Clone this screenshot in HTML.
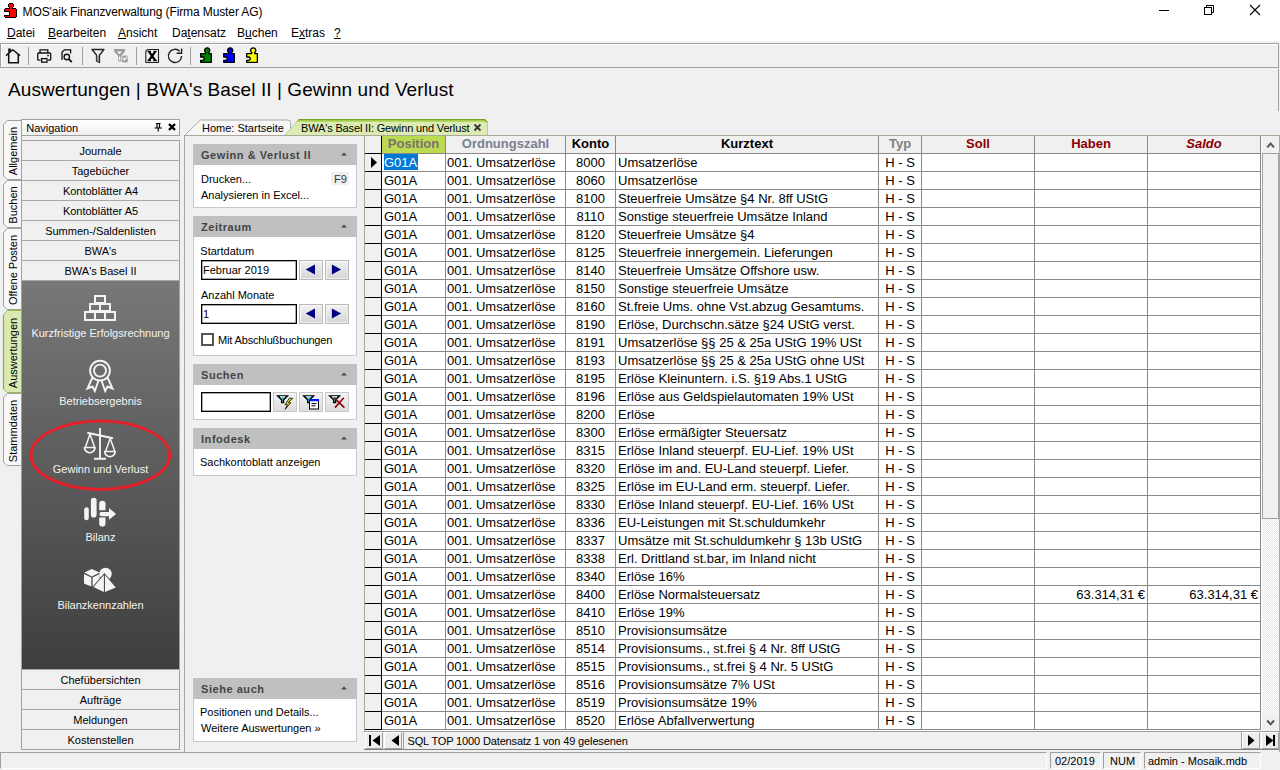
<!DOCTYPE html><html><head><meta charset="utf-8"><style>
*{margin:0;padding:0;box-sizing:border-box}
html,body{width:1280px;height:770px;overflow:hidden;background:#f0f0f0;font-family:"Liberation Sans",sans-serif;color:#000}
.t{position:absolute;white-space:nowrap}
.r{position:absolute}
svg{position:absolute;overflow:visible}
</style></head><body><div class="r" style="left:0px;top:0px;width:1280px;height:41px;background:#fff"></div>
<svg style="left:0;top:0" width="24" height="24" shape-rendering="crispEdges"><g fill="#000"><rect x="9" y="3" width="4" height="1"/><rect x="8" y="4" width="6" height="3"/><rect x="9" y="7" width="4" height="2"/><rect x="5" y="8" width="11" height="1"/><rect x="4" y="9" width="13" height="8"/><rect x="5" y="17" width="11" height="1"/></g><g fill="#f00"><rect x="9" y="4" width="4" height="3"/><rect x="10" y="7" width="2" height="2"/><rect x="5" y="9" width="11" height="8"/></g><rect x="5" y="11" width="5" height="1" fill="#000"/><rect x="9" y="12" width="1" height="3" fill="#000"/><rect x="5" y="15" width="5" height="1" fill="#000"/><rect x="4" y="12" width="5" height="3" fill="#fff"/></svg>
<div class="t" style="left:22.6px;top:3.84px;font-size:12px;line-height:16px;letter-spacing:-0.11px">MOS'aik Finanzverwaltung (Firma Muster AG)</div>
<svg style="left:1150px;top:0" width="130" height="24"><line x1="9" y1="10.5" x2="19" y2="10.5" stroke="#000" stroke-width="1"/><rect x="54.5" y="7.5" width="7" height="7" fill="none" stroke="#000"/><path d="M56.5 7.5 v-2 h7 v7 h-2" fill="none" stroke="#000"/><path d="M100 5 L110 15 M110 5 L100 15" stroke="#000" stroke-width="1.1"/></svg>
<div class="t" style="left:7px;top:24.84px;font-size:12px;line-height:16px;"><u>D</u>atei</div>
<div class="t" style="left:48px;top:24.84px;font-size:12px;line-height:16px;"><u>B</u>earbeiten</div>
<div class="t" style="left:118px;top:24.84px;font-size:12px;line-height:16px;"><u>A</u>nsicht</div>
<div class="t" style="left:172px;top:24.84px;font-size:12px;line-height:16px;">Da<u>t</u>ensatz</div>
<div class="t" style="left:237px;top:24.84px;font-size:12px;line-height:16px;">B<u>u</u>chen</div>
<div class="t" style="left:291px;top:24.84px;font-size:12px;line-height:16px;">E<u>x</u>tras</div>
<div class="t" style="left:334px;top:24.84px;font-size:12px;line-height:16px;"><u>?</u></div>
<div class="r" style="left:0px;top:43px;width:1279px;height:25px;background:#f0f0f0;border:1px solid #a0a0a0;box-shadow:inset 1px 1px 0 #fff"></div>
<div class="r" style="left:28px;top:47px;width:1px;height:18px;background:#a0a0a0"></div>
<div class="r" style="left:82px;top:47px;width:1px;height:18px;background:#a0a0a0"></div>
<div class="r" style="left:136px;top:47px;width:1px;height:18px;background:#a0a0a0"></div>
<div class="r" style="left:190px;top:47px;width:1px;height:18px;background:#a0a0a0"></div>
<svg style="left:0;top:43px" width="280" height="25"><path d="M6 12.6 L12.8 6.8 L20 12.6" fill="none" stroke="#111" stroke-width="1.4" stroke-linejoin="round"/><path d="M8.7 11 V19.8 H18.3 V11" fill="none" stroke="#111" stroke-width="1.5"/><path d="M8.9 9.8 V6.2 H10.2 V8.5" fill="none" stroke="#111" stroke-width="1.4"/><path d="M40 10 V6.8 H47.8 V10" fill="none" stroke="#111" stroke-width="1.3"/><path d="M40.5 17.2 h-1.8 a1 1 0 0 1 -1 -1 v-5.2 a1 1 0 0 1 1 -1 h11 a1 1 0 0 1 1 1 v5.2 a1 1 0 0 1 -1 1 h-1.8" fill="none" stroke="#111" stroke-width="1.3"/><rect x="41.6" y="15.6" width="5.4" height="3.6" fill="none" stroke="#111" stroke-width="1.3"/><circle cx="48" cy="12.6" r="0.9" fill="#111"/><path d="M62 17 V9.3 L64.4 6.8 H70.6 V10.5" fill="none" stroke="#111" stroke-width="1.3"/><circle cx="66.8" cy="14" r="2.7" fill="none" stroke="#111" stroke-width="1.4"/><path d="M68.7 16 L71.8 19.2" stroke="#111" stroke-width="1.8"/><path d="M92 6.5 H104 L99.5 12 V19.5 L96.5 18 V12 Z" fill="none" stroke="#222" stroke-width="1.3" stroke-linejoin="round"/><path d="M96.8 12.5 V17.5 L99 18.5 V12.5z" fill="#999"/><path d="M114 6 H125 V8.5 L121.6 12.5 V18.5 H118.2 V13 L114 8.5z" fill="#9c9c9c"/><path d="M117 8.6 H122 L119.5 11.2z" fill="#fafafa"/><rect x="119" y="13.5" width="1.3" height="4" fill="#fafafa"/><rect x="121.8" y="12.2" width="6.2" height="7.6" rx="1.2" fill="#9c9c9c" stroke="#f4f4f4" stroke-width="0.6"/><path d="M122.9 15 L124.6 16.8 L127 13.6" stroke="#fafafa" stroke-width="1.3" fill="none"/><path d="M145.8 19.5 V8.3 L147.6 6.5 H158.5 V19.5z" fill="none" stroke="#222" stroke-width="1.1"/><path d="M149 8.6 L155.2 17.3 M155.2 8.6 L149 17.3" stroke="#000" stroke-width="2.3"/><path d="M147.6 8.3 H151 M153.6 8.3 H156.6 M147.6 17.5 H151 M153.3 17.5 H156.8" stroke="#000" stroke-width="1.3"/><path d="M181.6 13 A6.6 6.6 0 1 1 179.7 8.3" fill="none" stroke="#222" stroke-width="1.4"/><path d="M176.6 10.3 H181.6 V5.5" fill="none" stroke="#222" stroke-width="1.4"/></svg>
<svg style="left:200px;top:47px" width="14" height="17"><path d="M0.65 6.65 H5.7 V5.6 A2.6 2.6 0 1 1 8.7 5.6 V6.65 H11.35 V15.35 H0.65 V13.3 H2.6 A1.65 1.65 0 0 0 2.6 10 H0.65 Z" fill="#008000" stroke="#000" stroke-width="1.3" stroke-linejoin="round"/></svg>
<svg style="left:223px;top:47px" width="14" height="17"><path d="M0.65 6.65 H5.7 V5.6 A2.6 2.6 0 1 1 8.7 5.6 V6.65 H11.35 V15.35 H0.65 V13.3 H2.6 A1.65 1.65 0 0 0 2.6 10 H0.65 Z" fill="#0000ff" stroke="#000" stroke-width="1.3" stroke-linejoin="round"/></svg>
<svg style="left:246px;top:47px" width="14" height="17"><path d="M0.65 6.65 H5.7 V5.6 A2.6 2.6 0 1 1 8.7 5.6 V6.65 H11.35 V15.35 H0.65 V13.3 H2.6 A1.65 1.65 0 0 0 2.6 10 H0.65 Z" fill="#ffff00" stroke="#000" stroke-width="1.3" stroke-linejoin="round"/></svg>
<div class="t" style="left:8px;top:77.42px;font-size:19px;line-height:25px;letter-spacing:0.08px">Auswertungen | BWA's Basel II | Gewinn und Verlust</div>
<div class="r" style="left:1278px;top:69px;width:1px;height:42px;background:#a0a0a0"></div>
<svg style="left:0;top:120px" width="22" height="61"><path d="M22 0.5 H7.5 L3.5 4.5 V56 L7 59.5 H22" fill="#f7f7f7" stroke="#a0a0a0" stroke-width="1"/></svg>
<div class="t" style="left:13px;top:151.0px;font-size:11px;line-height:12px;transform:translate(-50%,-50%) rotate(-90deg)">Allgemein</div>
<svg style="left:0;top:180px" width="22" height="49"><path d="M22 0.5 H7.5 L3.5 4.5 V44 L7 47.5 H22" fill="#f7f7f7" stroke="#a0a0a0" stroke-width="1"/></svg>
<div class="t" style="left:13px;top:205.0px;font-size:11px;line-height:12px;transform:translate(-50%,-50%) rotate(-90deg)">Buchen</div>
<svg style="left:0;top:228px" width="22" height="83"><path d="M22 0.5 H7.5 L3.5 4.5 V78 L7 81.5 H22" fill="#f7f7f7" stroke="#a0a0a0" stroke-width="1"/></svg>
<div class="t" style="left:13px;top:270.0px;font-size:11px;line-height:12px;transform:translate(-50%,-50%) rotate(-90deg)">Offene Posten</div>
<svg style="left:0;top:310px" width="22" height="84"><path d="M22 0.5 H7.5 L3.5 4.5 V79 L7 82.5 H22" fill="#dbe9b3" stroke="#8cc04a" stroke-width="1"/><path d="M3.5 5 V78.5" stroke="#7cb82e" stroke-width="1.2"/></svg>
<div class="t" style="left:13px;top:352.5px;font-size:11px;line-height:12px;transform:translate(-50%,-50%) rotate(-90deg)">Auswertungen</div>
<svg style="left:0;top:393px" width="22" height="74"><path d="M22 0.5 H7.5 L3.5 4.5 V69 L7 72.5 H22" fill="#f7f7f7" stroke="#a0a0a0" stroke-width="1"/></svg>
<div class="t" style="left:13px;top:430.5px;font-size:11px;line-height:12px;transform:translate(-50%,-50%) rotate(-90deg)">Stammdaten</div>
<div class="r" style="left:21px;top:119px;width:159px;height:17px;background:linear-gradient(#fff,#f0f0f0);border:1px solid #a0a0a0"></div>
<div class="t" style="left:26.2px;top:121.19px;font-size:11px;line-height:14px;">Navigation</div>
<div class="r" style="left:21px;top:135px;width:1px;height:6px;background:#a0a0a0"></div>
<svg style="left:150px;top:119px" width="30" height="17"><path d="M6 4.5 h4.5 M7 4.5 v4.5 M9.5 4.5 v4.5 M4.5 9 h7.5 M8.2 9 v3.5" stroke="#000" stroke-width="1.2" fill="none"/><path d="M19 5 L25 11 M25 5 L19 11" stroke="#000" stroke-width="2.4"/></svg>
<div class="r" style="left:21px;top:140px;width:159px;height:610px;background:#f0f0f0;border:1px solid #a0a0a0"></div>
<div class="t" style="left:22px;top:144.19px;font-size:11px;line-height:14px;width:157px;text-align:center;">Journale</div>
<div class="r" style="left:22px;top:160px;width:157px;height:1px;background:#a8a8a8"></div>
<div class="t" style="left:22px;top:164.19px;font-size:11px;line-height:14px;width:157px;text-align:center;">Tagebücher</div>
<div class="r" style="left:22px;top:180px;width:157px;height:1px;background:#a8a8a8"></div>
<div class="t" style="left:22px;top:184.19px;font-size:11px;line-height:14px;width:157px;text-align:center;">Kontoblätter A4</div>
<div class="r" style="left:22px;top:200px;width:157px;height:1px;background:#a8a8a8"></div>
<div class="t" style="left:22px;top:204.19px;font-size:11px;line-height:14px;width:157px;text-align:center;">Kontoblätter A5</div>
<div class="r" style="left:22px;top:220px;width:157px;height:1px;background:#a8a8a8"></div>
<div class="t" style="left:22px;top:224.19px;font-size:11px;line-height:14px;width:157px;text-align:center;">Summen-/Saldenlisten</div>
<div class="r" style="left:22px;top:240px;width:157px;height:1px;background:#a8a8a8"></div>
<div class="t" style="left:22px;top:244.19px;font-size:11px;line-height:14px;width:157px;text-align:center;">BWA's</div>
<div class="r" style="left:22px;top:260px;width:157px;height:1px;background:#a8a8a8"></div>
<div class="t" style="left:22px;top:264.19px;font-size:11px;line-height:14px;width:157px;text-align:center;">BWA's Basel II</div>
<div class="r" style="left:22px;top:280px;width:157px;height:1px;background:#a8a8a8"></div>
<div class="r" style="left:22px;top:281px;width:157px;height:388px;background:linear-gradient(#787878,#3e3e3e)"></div>
<div class="r" style="left:22px;top:669px;width:157px;height:1px;background:#a8a8a8"></div>
<div class="t" style="left:22px;top:673.19px;font-size:11px;line-height:14px;width:157px;text-align:center;">Chefübersichten</div>
<div class="r" style="left:22px;top:689px;width:157px;height:1px;background:#a8a8a8"></div>
<div class="t" style="left:22px;top:693.19px;font-size:11px;line-height:14px;width:157px;text-align:center;">Aufträge</div>
<div class="r" style="left:22px;top:709px;width:157px;height:1px;background:#a8a8a8"></div>
<div class="t" style="left:22px;top:713.19px;font-size:11px;line-height:14px;width:157px;text-align:center;">Meldungen</div>
<div class="r" style="left:22px;top:729px;width:157px;height:1px;background:#a8a8a8"></div>
<div class="t" style="left:22px;top:733.19px;font-size:11px;line-height:14px;width:157px;text-align:center;">Kostenstellen</div>
<div class="t" style="left:22px;top:326.39px;font-size:11px;line-height:14px;width:157px;text-align:center;color:#f4f4f4">Kurzfristige Erfolgsrechnung</div>
<div class="t" style="left:22px;top:393.89px;font-size:11px;line-height:14px;width:157px;text-align:center;color:#f4f4f4">Betriebsergebnis</div>
<div class="t" style="left:22px;top:461.89px;font-size:11px;line-height:14px;width:157px;text-align:center;color:#f4f4f4">Gewinn und Verlust</div>
<div class="t" style="left:22px;top:529.89px;font-size:11px;line-height:14px;width:157px;text-align:center;color:#f4f4f4">Bilanz</div>
<div class="t" style="left:22px;top:597.89px;font-size:11px;line-height:14px;width:157px;text-align:center;color:#f4f4f4">Bilanzkennzahlen</div>
<svg style="left:0;top:0" width="200" height="770"><g fill="none" stroke="#f4f4f4" stroke-width="2"><rect x="95" y="296" width="10" height="7"/><rect x="90" y="304" width="20" height="7"/><path d="M100 304 V311"/><rect x="85" y="312" width="30" height="8"/><path d="M95 312 V320 M105 312 V320"/></g><g fill="none" stroke="#f4f4f4" stroke-width="1.9"><circle cx="100" cy="370.6" r="9.9"/><circle cx="100" cy="370.6" r="6"/><path d="M92.5 377.5 L87.5 388.5 L92.5 386.5 L94.8 391 L98.5 380.5 M107.5 377.5 L112.5 388.5 L107.5 386.5 L105.2 391 L101.5 380.5" stroke-linejoin="miter"/></g><g fill="none" stroke="#f4f4f4" stroke-width="1.9"><path d="M100 428 V458 M94 458.8 H106"/><path d="M87.3 432.8 L113 438.3" stroke-width="2"/><path d="M90 434 L85.5 447 M90 434 L94.5 447 M110.2 438.5 L105.7 451 M110.2 438.5 L114.7 451" stroke-width="1.5"/><path d="M84.5 447.5 h10.5 a5.25 5.25 0 0 1 -10.5 0z M104.7 451.5 h10.5 a5.25 5.25 0 0 1 -10.5 0z" stroke-width="1.7"/></g><g fill="#f4f4f4"><rect x="84.2" y="507.3" width="4.6" height="13" rx="2.3"/><rect x="90.9" y="497.7" width="5.7" height="19.8" rx="2.8"/><path d="M99.2 510.2 V504 a3.15 3.15 0 0 1 6.3 0 V510.2z"/><path d="M99.2 517.5 V523.4 a3.15 3.15 0 0 0 6.3 0 V517.5z"/><path d="M101.5 512 H109 V508.1 L116.1 514 L109 519.8 V516.2 H101.5 a2.1 2.1 0 0 1 0 -4.2z"/></g><g fill="#f4f4f4"><circle cx="105.5" cy="574" r="6.2"/><path d="M84.4 572.6 L91.7 569 L99.7 572.6 L91.8 576.6z"/><path d="M84 574 V583.5 L91.3 586.6 V577.5z"/><path d="M92.6 577.5 L99.7 574 V583 L92.6 586.6z"/></g><path d="M104.4 573 L92 587.3 L104.4 593.3 L117 587.7z" fill="#4c4c4c"/><path d="M104.4 574.5 L93.4 587 L103.9 592 V575z M105 575 V592 L115.8 587.4z" fill="#f4f4f4"/><ellipse cx="100.3" cy="455.2" rx="69.3" ry="34.2" fill="none" stroke="#e4202a" stroke-width="3"/></svg>
<svg style="left:180px;top:115px" width="320" height="22"><path d="M4.5 20.5 L20.5 5 H108 Q110.5 5 110.5 7.5 V20.5" fill="#f7f7f7" stroke="#a8a8a8" stroke-width="1"/><path d="M104.5 20.5 L118.5 4.5 H304.5 L307.5 7.5 V20.5 Z" fill="#dcebb4" stroke="#b9cf98" stroke-width="1"/><path d="M118 5 L116.3 7 H307.3 L305 4.5z" fill="#b6d862"/><path d="M118.5 4.6 H304.6 L307.4 7.4" fill="none" stroke="#6da51d" stroke-width="1.2"/></svg>
<div class="t" style="left:202px;top:121.19px;font-size:11px;line-height:14px;">Home: Startseite</div>
<div class="t" style="left:301px;top:121.19px;font-size:11px;line-height:14px;letter-spacing:-0.15px">BWA's Basel II: Gewinn und Verlust</div>
<svg style="left:472px;top:122px" width="12" height="12"><path d="M2.5 2.5 L8.5 8.5 M8.5 2.5 L2.5 8.5" stroke="#333" stroke-width="1.8"/></svg>
<div class="r" style="left:184px;top:135px;width:1096px;height:1px;background:#aca899"></div>
<div class="r" style="left:184px;top:135px;width:1px;height:617px;background:#aca899"></div>
<div class="r" style="left:1279px;top:135px;width:1px;height:617px;background:#aca899"></div>
<div class="r" style="left:193px;top:144px;width:164px;height:21px;background:#c0c0c0"></div>
<div class="r" style="left:193px;top:165px;width:164px;height:43px;background:#fff;border:1px solid #c8c8c8;border-top:none"></div>
<div class="t" style="left:201px;top:148.19px;font-size:11px;line-height:14px;font-weight:bold;color:#444;letter-spacing:0.55px">Gewinn &amp; Verlust II</div>
<svg style="left:338px;top:150px" width="12" height="8"><path d="M3 5.5 L6 2.5 L9 5.5z" fill="#444"/></svg>
<div class="t" style="left:201px;top:172.19px;font-size:11px;line-height:14px;">Drucken...</div>
<div class="r" style="left:331px;top:172px;width:18px;height:13px;background:#f0f0f0"></div>
<div class="t" style="left:334px;top:172.19px;font-size:11px;line-height:14px;color:#333">F9</div>
<div class="t" style="left:201px;top:188.19px;font-size:11px;line-height:14px;">Analysieren in Excel...</div>
<div class="r" style="left:193px;top:216px;width:164px;height:21px;background:#c0c0c0"></div>
<div class="r" style="left:193px;top:237px;width:164px;height:119px;background:#fff;border:1px solid #c8c8c8;border-top:none"></div>
<div class="t" style="left:201px;top:220.19px;font-size:11px;line-height:14px;font-weight:bold;color:#444;letter-spacing:0.55px">Zeitraum</div>
<svg style="left:338px;top:222px" width="12" height="8"><path d="M3 5.5 L6 2.5 L9 5.5z" fill="#444"/></svg>
<div class="t" style="left:200.3px;top:244.19px;font-size:11px;line-height:14px;">Startdatum</div>
<div class="r" style="left:201px;top:260px;width:96px;height:20px;background:#fff;border:1px solid #000;box-shadow:inset 0 0 0 0.5px #555"></div>
<div class="t" style="left:203px;top:262.69px;font-size:11px;line-height:14px;">Februar 2019</div>
<div class="r" style="left:299px;top:260px;width:24px;height:20px;background:linear-gradient(#f2f2f2,#d4d4d4);border:1px solid #b8b8b8;box-shadow:inset 1px 1px 0 #fafafa,inset -1px -1px 0 #ececec"></div>
<svg style="left:299px;top:260px" width="24" height="20"><path d="M6.7 9.5 L16 4.6 V14.4z" fill="#000080"/></svg>
<div class="r" style="left:325px;top:260px;width:24px;height:20px;background:linear-gradient(#f2f2f2,#d4d4d4);border:1px solid #b8b8b8;box-shadow:inset 1px 1px 0 #fafafa,inset -1px -1px 0 #ececec"></div>
<svg style="left:325px;top:260px" width="24" height="20"><path d="M16.1 9.5 L6.9 4.6 V14.4z" fill="#000080"/></svg>
<div class="t" style="left:201px;top:288.19px;font-size:11px;line-height:14px;">Anzahl Monate</div>
<div class="r" style="left:201px;top:304px;width:96px;height:20px;background:#fff;border:1px solid #000;box-shadow:inset 0 0 0 0.5px #555"></div>
<div class="t" style="left:203px;top:306.69px;font-size:11px;line-height:14px;">1</div>
<div class="r" style="left:299px;top:304px;width:24px;height:20px;background:linear-gradient(#f2f2f2,#d4d4d4);border:1px solid #b8b8b8;box-shadow:inset 1px 1px 0 #fafafa,inset -1px -1px 0 #ececec"></div>
<svg style="left:299px;top:304px" width="24" height="20"><path d="M6.7 9.5 L16 4.6 V14.4z" fill="#000080"/></svg>
<div class="r" style="left:325px;top:304px;width:24px;height:20px;background:linear-gradient(#f2f2f2,#d4d4d4);border:1px solid #b8b8b8;box-shadow:inset 1px 1px 0 #fafafa,inset -1px -1px 0 #ececec"></div>
<svg style="left:325px;top:304px" width="24" height="20"><path d="M16.1 9.5 L6.9 4.6 V14.4z" fill="#000080"/></svg>
<div class="r" style="left:201px;top:333px;width:13px;height:13px;background:#fff;border:2px solid #555"></div>
<div class="t" style="left:218px;top:333.19px;font-size:11px;line-height:14px;letter-spacing:-0.15px">Mit Abschlußbuchungen</div>
<div class="r" style="left:193px;top:364px;width:164px;height:21px;background:#c0c0c0"></div>
<div class="r" style="left:193px;top:385px;width:164px;height:35px;background:#fff;border:1px solid #c8c8c8;border-top:none"></div>
<div class="t" style="left:201px;top:368.19px;font-size:11px;line-height:14px;font-weight:bold;color:#444;letter-spacing:0.55px">Suchen</div>
<svg style="left:338px;top:370px" width="12" height="8"><path d="M3 5.5 L6 2.5 L9 5.5z" fill="#444"/></svg>
<div class="r" style="left:201px;top:392px;width:70px;height:20px;background:#fff;border:1px solid #000;box-shadow:inset 0 0 0 0.5px #555"></div>
<div class="r" style="left:273px;top:392px;width:24px;height:20px;background:linear-gradient(#f4f4f4,#dcdcdc);border:1px solid #c8c8c8"></div>
<div class="r" style="left:299px;top:392px;width:24px;height:20px;background:linear-gradient(#f4f4f4,#dcdcdc);border:1px solid #c8c8c8"></div>
<div class="r" style="left:325px;top:392px;width:24px;height:20px;background:linear-gradient(#f4f4f4,#dcdcdc);border:1px solid #c8c8c8"></div>
<svg style="left:273px;top:392px" width="80" height="20"><path d="M4.6 3.8 H14.6 L10.6 7.8 V10.6 H8.6 V7.8 Z" fill="#5cc8c8" stroke="#000" stroke-width="1.3" stroke-linejoin="miter"/><path d="M7 4.6 H12.2" stroke="#fff" stroke-width="0.8"/><path d="M19.6 6.2 L15.2 10.8 H17.6 L12.2 17.2 L14.4 12.6 H12.2 L16.4 6.2z" fill="#f4e800" stroke="#111" stroke-width="0.9" stroke-linejoin="miter"/><path d="M30.6 3.8 H40.6 L36.6 7.8 V10.6 H34.6 V7.8 Z" fill="#5cc8c8" stroke="#000" stroke-width="1.3" stroke-linejoin="miter"/><path d="M33 4.6 H38.2" stroke="#fff" stroke-width="0.8"/><rect x="36.5" y="7.5" width="9" height="9.5" fill="#fff" stroke="#000" stroke-width="1"/><rect x="36" y="7" width="10" height="2.2" fill="#0018f0"/><path d="M38.5 11.6 h5 M38.5 13.8 h4" stroke="#000" stroke-width="1"/><path d="M56.6 3.8 H66.6 L62.6 7.8 V10.6 H60.6 V7.8 Z" fill="#5cc8c8" stroke="#000" stroke-width="1.3" stroke-linejoin="miter"/><path d="M59 4.6 H64.2" stroke="#fff" stroke-width="0.8"/><path d="M61.2 5.8 L71.4 15.6 M70.8 5.8 L62 15.6" stroke="#8b0a0a" stroke-width="1.7"/></svg>
<div class="r" style="left:193px;top:428px;width:164px;height:21px;background:#c0c0c0"></div>
<div class="r" style="left:193px;top:449px;width:164px;height:27px;background:#fff;border:1px solid #c8c8c8;border-top:none"></div>
<div class="t" style="left:201px;top:432.19px;font-size:11px;line-height:14px;font-weight:bold;color:#444;letter-spacing:0.55px">Infodesk</div>
<svg style="left:338px;top:434px" width="12" height="8"><path d="M3 5.5 L6 2.5 L9 5.5z" fill="#444"/></svg>
<div class="t" style="left:200px;top:455.19px;font-size:11px;line-height:14px;">Sachkontoblatt anzeigen</div>
<div class="r" style="left:193px;top:678px;width:164px;height:21px;background:#c0c0c0"></div>
<div class="r" style="left:193px;top:699px;width:164px;height:43px;background:#fff;border:1px solid #c8c8c8;border-top:none"></div>
<div class="t" style="left:201px;top:682.19px;font-size:11px;line-height:14px;font-weight:bold;color:#444;letter-spacing:0.55px">Siehe auch</div>
<svg style="left:338px;top:684px" width="12" height="8"><path d="M3 5.5 L6 2.5 L9 5.5z" fill="#444"/></svg>
<div class="t" style="left:200px;top:705.19px;font-size:11px;line-height:14px;">Positionen und Details...</div>
<div class="t" style="left:201px;top:721.19px;font-size:11px;line-height:14px;">Weitere Auswertungen »</div>
<div class="r" style="left:364px;top:136px;width:897px;height:596px;background:#fff"></div>
<div class="r" style="left:364px;top:136px;width:1px;height:596px;background:#aca899"></div>
<div class="r" style="left:365px;top:136px;width:896px;height:17px;background:#f0f0f0"></div>
<div class="r" style="left:382px;top:136px;width:63px;height:17px;background:#badb52"></div>
<div class="r" style="left:365px;top:154px;width:16px;height:576px;background:#f0f0f0"></div>
<div class="r" style="left:382px;top:153px;width:879px;height:1px;background:#888"></div>
<div class="r" style="left:365px;top:153px;width:17px;height:1px;background:#000"></div>
<div class="r" style="left:382px;top:171px;width:879px;height:1px;background:#888"></div>
<div class="r" style="left:365px;top:171px;width:17px;height:1px;background:#000"></div>
<div class="r" style="left:382px;top:189px;width:879px;height:1px;background:#888"></div>
<div class="r" style="left:365px;top:189px;width:17px;height:1px;background:#000"></div>
<div class="r" style="left:382px;top:207px;width:879px;height:1px;background:#888"></div>
<div class="r" style="left:365px;top:207px;width:17px;height:1px;background:#000"></div>
<div class="r" style="left:382px;top:225px;width:879px;height:1px;background:#888"></div>
<div class="r" style="left:365px;top:225px;width:17px;height:1px;background:#000"></div>
<div class="r" style="left:382px;top:243px;width:879px;height:1px;background:#888"></div>
<div class="r" style="left:365px;top:243px;width:17px;height:1px;background:#000"></div>
<div class="r" style="left:382px;top:261px;width:879px;height:1px;background:#888"></div>
<div class="r" style="left:365px;top:261px;width:17px;height:1px;background:#000"></div>
<div class="r" style="left:382px;top:279px;width:879px;height:1px;background:#888"></div>
<div class="r" style="left:365px;top:279px;width:17px;height:1px;background:#000"></div>
<div class="r" style="left:382px;top:297px;width:879px;height:1px;background:#888"></div>
<div class="r" style="left:365px;top:297px;width:17px;height:1px;background:#000"></div>
<div class="r" style="left:382px;top:315px;width:879px;height:1px;background:#888"></div>
<div class="r" style="left:365px;top:315px;width:17px;height:1px;background:#000"></div>
<div class="r" style="left:382px;top:333px;width:879px;height:1px;background:#888"></div>
<div class="r" style="left:365px;top:333px;width:17px;height:1px;background:#000"></div>
<div class="r" style="left:382px;top:351px;width:879px;height:1px;background:#888"></div>
<div class="r" style="left:365px;top:351px;width:17px;height:1px;background:#000"></div>
<div class="r" style="left:382px;top:369px;width:879px;height:1px;background:#888"></div>
<div class="r" style="left:365px;top:369px;width:17px;height:1px;background:#000"></div>
<div class="r" style="left:382px;top:387px;width:879px;height:1px;background:#888"></div>
<div class="r" style="left:365px;top:387px;width:17px;height:1px;background:#000"></div>
<div class="r" style="left:382px;top:405px;width:879px;height:1px;background:#888"></div>
<div class="r" style="left:365px;top:405px;width:17px;height:1px;background:#000"></div>
<div class="r" style="left:382px;top:423px;width:879px;height:1px;background:#888"></div>
<div class="r" style="left:365px;top:423px;width:17px;height:1px;background:#000"></div>
<div class="r" style="left:382px;top:441px;width:879px;height:1px;background:#888"></div>
<div class="r" style="left:365px;top:441px;width:17px;height:1px;background:#000"></div>
<div class="r" style="left:382px;top:459px;width:879px;height:1px;background:#888"></div>
<div class="r" style="left:365px;top:459px;width:17px;height:1px;background:#000"></div>
<div class="r" style="left:382px;top:477px;width:879px;height:1px;background:#888"></div>
<div class="r" style="left:365px;top:477px;width:17px;height:1px;background:#000"></div>
<div class="r" style="left:382px;top:495px;width:879px;height:1px;background:#888"></div>
<div class="r" style="left:365px;top:495px;width:17px;height:1px;background:#000"></div>
<div class="r" style="left:382px;top:513px;width:879px;height:1px;background:#888"></div>
<div class="r" style="left:365px;top:513px;width:17px;height:1px;background:#000"></div>
<div class="r" style="left:382px;top:531px;width:879px;height:1px;background:#888"></div>
<div class="r" style="left:365px;top:531px;width:17px;height:1px;background:#000"></div>
<div class="r" style="left:382px;top:549px;width:879px;height:1px;background:#888"></div>
<div class="r" style="left:365px;top:549px;width:17px;height:1px;background:#000"></div>
<div class="r" style="left:382px;top:567px;width:879px;height:1px;background:#888"></div>
<div class="r" style="left:365px;top:567px;width:17px;height:1px;background:#000"></div>
<div class="r" style="left:382px;top:585px;width:879px;height:1px;background:#888"></div>
<div class="r" style="left:365px;top:585px;width:17px;height:1px;background:#000"></div>
<div class="r" style="left:382px;top:603px;width:879px;height:1px;background:#888"></div>
<div class="r" style="left:365px;top:603px;width:17px;height:1px;background:#000"></div>
<div class="r" style="left:382px;top:621px;width:879px;height:1px;background:#888"></div>
<div class="r" style="left:365px;top:621px;width:17px;height:1px;background:#000"></div>
<div class="r" style="left:382px;top:639px;width:879px;height:1px;background:#888"></div>
<div class="r" style="left:365px;top:639px;width:17px;height:1px;background:#000"></div>
<div class="r" style="left:382px;top:657px;width:879px;height:1px;background:#888"></div>
<div class="r" style="left:365px;top:657px;width:17px;height:1px;background:#000"></div>
<div class="r" style="left:382px;top:675px;width:879px;height:1px;background:#888"></div>
<div class="r" style="left:365px;top:675px;width:17px;height:1px;background:#000"></div>
<div class="r" style="left:382px;top:693px;width:879px;height:1px;background:#888"></div>
<div class="r" style="left:365px;top:693px;width:17px;height:1px;background:#000"></div>
<div class="r" style="left:382px;top:711px;width:879px;height:1px;background:#888"></div>
<div class="r" style="left:365px;top:711px;width:17px;height:1px;background:#000"></div>
<div class="r" style="left:382px;top:729px;width:879px;height:1px;background:#888"></div>
<div class="r" style="left:365px;top:729px;width:17px;height:1px;background:#000"></div>
<div class="r" style="left:445px;top:136px;width:1px;height:594px;background:#888"></div>
<div class="r" style="left:565px;top:136px;width:1px;height:594px;background:#888"></div>
<div class="r" style="left:615px;top:136px;width:1px;height:594px;background:#888"></div>
<div class="r" style="left:878px;top:136px;width:1px;height:594px;background:#888"></div>
<div class="r" style="left:921px;top:136px;width:1px;height:594px;background:#888"></div>
<div class="r" style="left:1034px;top:136px;width:1px;height:594px;background:#888"></div>
<div class="r" style="left:1147px;top:136px;width:1px;height:594px;background:#888"></div>
<div class="r" style="left:1260px;top:136px;width:1px;height:594px;background:#888"></div>
<div class="r" style="left:381px;top:136px;width:1px;height:594px;background:#000"></div>
<div class="t" style="left:382px;top:135.40px;font-size:13px;line-height:17px;width:63px;text-align:center;font-weight:bold;color:#7a7070">Position</div>
<div class="t" style="left:446px;top:135.40px;font-size:13px;line-height:17px;width:119px;text-align:center;font-weight:bold;color:#7a8090">Ordnungszahl</div>
<div class="t" style="left:566px;top:135.40px;font-size:13px;line-height:17px;width:49px;text-align:center;font-weight:bold;color:#000">Konto</div>
<div class="t" style="left:616px;top:135.40px;font-size:13px;line-height:17px;width:262px;text-align:center;font-weight:bold;color:#000">Kurztext</div>
<div class="t" style="left:879px;top:135.40px;font-size:13px;line-height:17px;width:42px;text-align:center;font-weight:bold;color:#808080">Typ</div>
<div class="t" style="left:922px;top:135.40px;font-size:13px;line-height:17px;width:112px;text-align:center;font-weight:bold;color:#8b0000">Soll</div>
<div class="t" style="left:1035px;top:135.40px;font-size:13px;line-height:17px;width:112px;text-align:center;font-weight:bold;color:#8b0000">Haben</div>
<div class="t" style="left:1148px;top:135.40px;font-size:13px;line-height:17px;width:112px;text-align:center;font-weight:bold;color:#8b0000;font-style:italic">Saldo</div>
<div class="r" style="left:384px;top:154px;width:34px;height:16px;background:#0078d7"></div>
<div class="t" style="left:384px;top:154.00px;font-size:13px;line-height:17px;color:#fff">G01A</div>
<div class="t" style="left:447px;top:154.00px;font-size:13px;line-height:17px;">001. Umsatzerlöse</div>
<div class="t" style="left:566px;top:154.00px;font-size:13px;line-height:17px;width:49px;text-align:center;">8000</div>
<div class="t" style="left:618px;top:154.00px;font-size:13px;line-height:17px;">Umsatzerlöse</div>
<div class="t" style="left:879px;top:154.00px;font-size:13px;line-height:17px;width:42px;text-align:center;">H - S</div>
<div class="t" style="left:384px;top:172.00px;font-size:13px;line-height:17px;">G01A</div>
<div class="t" style="left:447px;top:172.00px;font-size:13px;line-height:17px;">001. Umsatzerlöse</div>
<div class="t" style="left:566px;top:172.00px;font-size:13px;line-height:17px;width:49px;text-align:center;">8060</div>
<div class="t" style="left:618px;top:172.00px;font-size:13px;line-height:17px;">Umsatzerlöse</div>
<div class="t" style="left:879px;top:172.00px;font-size:13px;line-height:17px;width:42px;text-align:center;">H - S</div>
<div class="t" style="left:384px;top:190.00px;font-size:13px;line-height:17px;">G01A</div>
<div class="t" style="left:447px;top:190.00px;font-size:13px;line-height:17px;">001. Umsatzerlöse</div>
<div class="t" style="left:566px;top:190.00px;font-size:13px;line-height:17px;width:49px;text-align:center;">8100</div>
<div class="t" style="left:618px;top:190.00px;font-size:13px;line-height:17px;">Steuerfreie Umsätze §4 Nr. 8ff UStG</div>
<div class="t" style="left:879px;top:190.00px;font-size:13px;line-height:17px;width:42px;text-align:center;">H - S</div>
<div class="t" style="left:384px;top:208.00px;font-size:13px;line-height:17px;">G01A</div>
<div class="t" style="left:447px;top:208.00px;font-size:13px;line-height:17px;">001. Umsatzerlöse</div>
<div class="t" style="left:566px;top:208.00px;font-size:13px;line-height:17px;width:49px;text-align:center;">8110</div>
<div class="t" style="left:618px;top:208.00px;font-size:13px;line-height:17px;">Sonstige steuerfreie Umsätze Inland</div>
<div class="t" style="left:879px;top:208.00px;font-size:13px;line-height:17px;width:42px;text-align:center;">H - S</div>
<div class="t" style="left:384px;top:226.00px;font-size:13px;line-height:17px;">G01A</div>
<div class="t" style="left:447px;top:226.00px;font-size:13px;line-height:17px;">001. Umsatzerlöse</div>
<div class="t" style="left:566px;top:226.00px;font-size:13px;line-height:17px;width:49px;text-align:center;">8120</div>
<div class="t" style="left:618px;top:226.00px;font-size:13px;line-height:17px;">Steuerfreie Umsätze §4</div>
<div class="t" style="left:879px;top:226.00px;font-size:13px;line-height:17px;width:42px;text-align:center;">H - S</div>
<div class="t" style="left:384px;top:244.00px;font-size:13px;line-height:17px;">G01A</div>
<div class="t" style="left:447px;top:244.00px;font-size:13px;line-height:17px;">001. Umsatzerlöse</div>
<div class="t" style="left:566px;top:244.00px;font-size:13px;line-height:17px;width:49px;text-align:center;">8125</div>
<div class="t" style="left:618px;top:244.00px;font-size:13px;line-height:17px;">Steuerfreie innergemein. Lieferungen</div>
<div class="t" style="left:879px;top:244.00px;font-size:13px;line-height:17px;width:42px;text-align:center;">H - S</div>
<div class="t" style="left:384px;top:262.00px;font-size:13px;line-height:17px;">G01A</div>
<div class="t" style="left:447px;top:262.00px;font-size:13px;line-height:17px;">001. Umsatzerlöse</div>
<div class="t" style="left:566px;top:262.00px;font-size:13px;line-height:17px;width:49px;text-align:center;">8140</div>
<div class="t" style="left:618px;top:262.00px;font-size:13px;line-height:17px;">Steuerfreie Umsätze Offshore usw.</div>
<div class="t" style="left:879px;top:262.00px;font-size:13px;line-height:17px;width:42px;text-align:center;">H - S</div>
<div class="t" style="left:384px;top:280.00px;font-size:13px;line-height:17px;">G01A</div>
<div class="t" style="left:447px;top:280.00px;font-size:13px;line-height:17px;">001. Umsatzerlöse</div>
<div class="t" style="left:566px;top:280.00px;font-size:13px;line-height:17px;width:49px;text-align:center;">8150</div>
<div class="t" style="left:618px;top:280.00px;font-size:13px;line-height:17px;">Sonstige steuerfreie Umsätze</div>
<div class="t" style="left:879px;top:280.00px;font-size:13px;line-height:17px;width:42px;text-align:center;">H - S</div>
<div class="t" style="left:384px;top:298.00px;font-size:13px;line-height:17px;">G01A</div>
<div class="t" style="left:447px;top:298.00px;font-size:13px;line-height:17px;">001. Umsatzerlöse</div>
<div class="t" style="left:566px;top:298.00px;font-size:13px;line-height:17px;width:49px;text-align:center;">8160</div>
<div class="t" style="left:618px;top:298.00px;font-size:13px;line-height:17px;">St.freie Ums. ohne Vst.abzug Gesamtums.</div>
<div class="t" style="left:879px;top:298.00px;font-size:13px;line-height:17px;width:42px;text-align:center;">H - S</div>
<div class="t" style="left:384px;top:316.00px;font-size:13px;line-height:17px;">G01A</div>
<div class="t" style="left:447px;top:316.00px;font-size:13px;line-height:17px;">001. Umsatzerlöse</div>
<div class="t" style="left:566px;top:316.00px;font-size:13px;line-height:17px;width:49px;text-align:center;">8190</div>
<div class="t" style="left:618px;top:316.00px;font-size:13px;line-height:17px;">Erlöse, Durchschn.sätze §24 UStG verst.</div>
<div class="t" style="left:879px;top:316.00px;font-size:13px;line-height:17px;width:42px;text-align:center;">H - S</div>
<div class="t" style="left:384px;top:334.00px;font-size:13px;line-height:17px;">G01A</div>
<div class="t" style="left:447px;top:334.00px;font-size:13px;line-height:17px;">001. Umsatzerlöse</div>
<div class="t" style="left:566px;top:334.00px;font-size:13px;line-height:17px;width:49px;text-align:center;">8191</div>
<div class="t" style="left:618px;top:334.00px;font-size:13px;line-height:17px;">Umsatzerlöse §§ 25 &amp; 25a UStG 19% USt</div>
<div class="t" style="left:879px;top:334.00px;font-size:13px;line-height:17px;width:42px;text-align:center;">H - S</div>
<div class="t" style="left:384px;top:352.00px;font-size:13px;line-height:17px;">G01A</div>
<div class="t" style="left:447px;top:352.00px;font-size:13px;line-height:17px;">001. Umsatzerlöse</div>
<div class="t" style="left:566px;top:352.00px;font-size:13px;line-height:17px;width:49px;text-align:center;">8193</div>
<div class="t" style="left:618px;top:352.00px;font-size:13px;line-height:17px;">Umsatzerlöse §§ 25 &amp; 25a UStG ohne USt</div>
<div class="t" style="left:879px;top:352.00px;font-size:13px;line-height:17px;width:42px;text-align:center;">H - S</div>
<div class="t" style="left:384px;top:370.00px;font-size:13px;line-height:17px;">G01A</div>
<div class="t" style="left:447px;top:370.00px;font-size:13px;line-height:17px;">001. Umsatzerlöse</div>
<div class="t" style="left:566px;top:370.00px;font-size:13px;line-height:17px;width:49px;text-align:center;">8195</div>
<div class="t" style="left:618px;top:370.00px;font-size:13px;line-height:17px;">Erlöse Kleinuntern. i.S. §19 Abs.1 UStG</div>
<div class="t" style="left:879px;top:370.00px;font-size:13px;line-height:17px;width:42px;text-align:center;">H - S</div>
<div class="t" style="left:384px;top:388.00px;font-size:13px;line-height:17px;">G01A</div>
<div class="t" style="left:447px;top:388.00px;font-size:13px;line-height:17px;">001. Umsatzerlöse</div>
<div class="t" style="left:566px;top:388.00px;font-size:13px;line-height:17px;width:49px;text-align:center;">8196</div>
<div class="t" style="left:618px;top:388.00px;font-size:13px;line-height:17px;">Erlöse aus Geldspielautomaten 19% USt</div>
<div class="t" style="left:879px;top:388.00px;font-size:13px;line-height:17px;width:42px;text-align:center;">H - S</div>
<div class="t" style="left:384px;top:406.00px;font-size:13px;line-height:17px;">G01A</div>
<div class="t" style="left:447px;top:406.00px;font-size:13px;line-height:17px;">001. Umsatzerlöse</div>
<div class="t" style="left:566px;top:406.00px;font-size:13px;line-height:17px;width:49px;text-align:center;">8200</div>
<div class="t" style="left:618px;top:406.00px;font-size:13px;line-height:17px;">Erlöse</div>
<div class="t" style="left:879px;top:406.00px;font-size:13px;line-height:17px;width:42px;text-align:center;">H - S</div>
<div class="t" style="left:384px;top:424.00px;font-size:13px;line-height:17px;">G01A</div>
<div class="t" style="left:447px;top:424.00px;font-size:13px;line-height:17px;">001. Umsatzerlöse</div>
<div class="t" style="left:566px;top:424.00px;font-size:13px;line-height:17px;width:49px;text-align:center;">8300</div>
<div class="t" style="left:618px;top:424.00px;font-size:13px;line-height:17px;">Erlöse ermäßigter Steuersatz</div>
<div class="t" style="left:879px;top:424.00px;font-size:13px;line-height:17px;width:42px;text-align:center;">H - S</div>
<div class="t" style="left:384px;top:442.00px;font-size:13px;line-height:17px;">G01A</div>
<div class="t" style="left:447px;top:442.00px;font-size:13px;line-height:17px;">001. Umsatzerlöse</div>
<div class="t" style="left:566px;top:442.00px;font-size:13px;line-height:17px;width:49px;text-align:center;">8315</div>
<div class="t" style="left:618px;top:442.00px;font-size:13px;line-height:17px;">Erlöse Inland steuerpf. EU-Lief. 19% USt</div>
<div class="t" style="left:879px;top:442.00px;font-size:13px;line-height:17px;width:42px;text-align:center;">H - S</div>
<div class="t" style="left:384px;top:460.00px;font-size:13px;line-height:17px;">G01A</div>
<div class="t" style="left:447px;top:460.00px;font-size:13px;line-height:17px;">001. Umsatzerlöse</div>
<div class="t" style="left:566px;top:460.00px;font-size:13px;line-height:17px;width:49px;text-align:center;">8320</div>
<div class="t" style="left:618px;top:460.00px;font-size:13px;line-height:17px;">Erlöse im and. EU-Land steuerpf. Liefer.</div>
<div class="t" style="left:879px;top:460.00px;font-size:13px;line-height:17px;width:42px;text-align:center;">H - S</div>
<div class="t" style="left:384px;top:478.00px;font-size:13px;line-height:17px;">G01A</div>
<div class="t" style="left:447px;top:478.00px;font-size:13px;line-height:17px;">001. Umsatzerlöse</div>
<div class="t" style="left:566px;top:478.00px;font-size:13px;line-height:17px;width:49px;text-align:center;">8325</div>
<div class="t" style="left:618px;top:478.00px;font-size:13px;line-height:17px;">Erlöse im EU-Land erm. steuerpf. Liefer.</div>
<div class="t" style="left:879px;top:478.00px;font-size:13px;line-height:17px;width:42px;text-align:center;">H - S</div>
<div class="t" style="left:384px;top:496.00px;font-size:13px;line-height:17px;">G01A</div>
<div class="t" style="left:447px;top:496.00px;font-size:13px;line-height:17px;">001. Umsatzerlöse</div>
<div class="t" style="left:566px;top:496.00px;font-size:13px;line-height:17px;width:49px;text-align:center;">8330</div>
<div class="t" style="left:618px;top:496.00px;font-size:13px;line-height:17px;">Erlöse Inland steuerpf. EU-Lief. 16% USt</div>
<div class="t" style="left:879px;top:496.00px;font-size:13px;line-height:17px;width:42px;text-align:center;">H - S</div>
<div class="t" style="left:384px;top:514.00px;font-size:13px;line-height:17px;">G01A</div>
<div class="t" style="left:447px;top:514.00px;font-size:13px;line-height:17px;">001. Umsatzerlöse</div>
<div class="t" style="left:566px;top:514.00px;font-size:13px;line-height:17px;width:49px;text-align:center;">8336</div>
<div class="t" style="left:618px;top:514.00px;font-size:13px;line-height:17px;">EU-Leistungen mit St.schuldumkehr</div>
<div class="t" style="left:879px;top:514.00px;font-size:13px;line-height:17px;width:42px;text-align:center;">H - S</div>
<div class="t" style="left:384px;top:532.00px;font-size:13px;line-height:17px;">G01A</div>
<div class="t" style="left:447px;top:532.00px;font-size:13px;line-height:17px;">001. Umsatzerlöse</div>
<div class="t" style="left:566px;top:532.00px;font-size:13px;line-height:17px;width:49px;text-align:center;">8337</div>
<div class="t" style="left:618px;top:532.00px;font-size:13px;line-height:17px;">Umsätze mit St.schuldumkehr § 13b UStG</div>
<div class="t" style="left:879px;top:532.00px;font-size:13px;line-height:17px;width:42px;text-align:center;">H - S</div>
<div class="t" style="left:384px;top:550.00px;font-size:13px;line-height:17px;">G01A</div>
<div class="t" style="left:447px;top:550.00px;font-size:13px;line-height:17px;">001. Umsatzerlöse</div>
<div class="t" style="left:566px;top:550.00px;font-size:13px;line-height:17px;width:49px;text-align:center;">8338</div>
<div class="t" style="left:618px;top:550.00px;font-size:13px;line-height:17px;">Erl. Drittland st.bar, im Inland nicht</div>
<div class="t" style="left:879px;top:550.00px;font-size:13px;line-height:17px;width:42px;text-align:center;">H - S</div>
<div class="t" style="left:384px;top:568.00px;font-size:13px;line-height:17px;">G01A</div>
<div class="t" style="left:447px;top:568.00px;font-size:13px;line-height:17px;">001. Umsatzerlöse</div>
<div class="t" style="left:566px;top:568.00px;font-size:13px;line-height:17px;width:49px;text-align:center;">8340</div>
<div class="t" style="left:618px;top:568.00px;font-size:13px;line-height:17px;">Erlöse 16%</div>
<div class="t" style="left:879px;top:568.00px;font-size:13px;line-height:17px;width:42px;text-align:center;">H - S</div>
<div class="t" style="left:384px;top:586.00px;font-size:13px;line-height:17px;">G01A</div>
<div class="t" style="left:447px;top:586.00px;font-size:13px;line-height:17px;">001. Umsatzerlöse</div>
<div class="t" style="left:566px;top:586.00px;font-size:13px;line-height:17px;width:49px;text-align:center;">8400</div>
<div class="t" style="left:618px;top:586.00px;font-size:13px;line-height:17px;">Erlöse Normalsteuersatz</div>
<div class="t" style="left:879px;top:586.00px;font-size:13px;line-height:17px;width:42px;text-align:center;">H - S</div>
<div class="t" style="left:1035px;top:586.00px;font-size:13px;line-height:17px;width:110px;text-align:right;">63.314,31 €</div>
<div class="t" style="left:1148px;top:586.00px;font-size:13px;line-height:17px;width:110px;text-align:right;">63.314,31 €</div>
<div class="t" style="left:384px;top:604.00px;font-size:13px;line-height:17px;">G01A</div>
<div class="t" style="left:447px;top:604.00px;font-size:13px;line-height:17px;">001. Umsatzerlöse</div>
<div class="t" style="left:566px;top:604.00px;font-size:13px;line-height:17px;width:49px;text-align:center;">8410</div>
<div class="t" style="left:618px;top:604.00px;font-size:13px;line-height:17px;">Erlöse 19%</div>
<div class="t" style="left:879px;top:604.00px;font-size:13px;line-height:17px;width:42px;text-align:center;">H - S</div>
<div class="t" style="left:384px;top:622.00px;font-size:13px;line-height:17px;">G01A</div>
<div class="t" style="left:447px;top:622.00px;font-size:13px;line-height:17px;">001. Umsatzerlöse</div>
<div class="t" style="left:566px;top:622.00px;font-size:13px;line-height:17px;width:49px;text-align:center;">8510</div>
<div class="t" style="left:618px;top:622.00px;font-size:13px;line-height:17px;">Provisionsumsätze</div>
<div class="t" style="left:879px;top:622.00px;font-size:13px;line-height:17px;width:42px;text-align:center;">H - S</div>
<div class="t" style="left:384px;top:640.00px;font-size:13px;line-height:17px;">G01A</div>
<div class="t" style="left:447px;top:640.00px;font-size:13px;line-height:17px;">001. Umsatzerlöse</div>
<div class="t" style="left:566px;top:640.00px;font-size:13px;line-height:17px;width:49px;text-align:center;">8514</div>
<div class="t" style="left:618px;top:640.00px;font-size:13px;line-height:17px;">Provisionsums., st.frei § 4 Nr. 8ff UStG</div>
<div class="t" style="left:879px;top:640.00px;font-size:13px;line-height:17px;width:42px;text-align:center;">H - S</div>
<div class="t" style="left:384px;top:658.00px;font-size:13px;line-height:17px;">G01A</div>
<div class="t" style="left:447px;top:658.00px;font-size:13px;line-height:17px;">001. Umsatzerlöse</div>
<div class="t" style="left:566px;top:658.00px;font-size:13px;line-height:17px;width:49px;text-align:center;">8515</div>
<div class="t" style="left:618px;top:658.00px;font-size:13px;line-height:17px;">Provisionsums., st.frei § 4 Nr. 5 UStG</div>
<div class="t" style="left:879px;top:658.00px;font-size:13px;line-height:17px;width:42px;text-align:center;">H - S</div>
<div class="t" style="left:384px;top:676.00px;font-size:13px;line-height:17px;">G01A</div>
<div class="t" style="left:447px;top:676.00px;font-size:13px;line-height:17px;">001. Umsatzerlöse</div>
<div class="t" style="left:566px;top:676.00px;font-size:13px;line-height:17px;width:49px;text-align:center;">8516</div>
<div class="t" style="left:618px;top:676.00px;font-size:13px;line-height:17px;">Provisionsumsätze 7% USt</div>
<div class="t" style="left:879px;top:676.00px;font-size:13px;line-height:17px;width:42px;text-align:center;">H - S</div>
<div class="t" style="left:384px;top:694.00px;font-size:13px;line-height:17px;">G01A</div>
<div class="t" style="left:447px;top:694.00px;font-size:13px;line-height:17px;">001. Umsatzerlöse</div>
<div class="t" style="left:566px;top:694.00px;font-size:13px;line-height:17px;width:49px;text-align:center;">8519</div>
<div class="t" style="left:618px;top:694.00px;font-size:13px;line-height:17px;">Provisionsumsätze 19%</div>
<div class="t" style="left:879px;top:694.00px;font-size:13px;line-height:17px;width:42px;text-align:center;">H - S</div>
<div class="t" style="left:384px;top:712.00px;font-size:13px;line-height:17px;">G01A</div>
<div class="t" style="left:447px;top:712.00px;font-size:13px;line-height:17px;">001. Umsatzerlöse</div>
<div class="t" style="left:566px;top:712.00px;font-size:13px;line-height:17px;width:49px;text-align:center;">8520</div>
<div class="t" style="left:618px;top:712.00px;font-size:13px;line-height:17px;">Erlöse Abfallverwertung</div>
<div class="t" style="left:879px;top:712.00px;font-size:13px;line-height:17px;width:42px;text-align:center;">H - S</div>
<svg style="left:365px;top:154px" width="16" height="18"><path d="M6 3 L12 8.5 L6 14z" fill="#000"/></svg>
<div class="r" style="left:1261px;top:136px;width:1px;height:594px;background:#fff"></div>
<div class="r" style="left:1262px;top:136px;width:17px;height:594px;background:#f0f0f0"></div>
<div class="r" style="left:1262px;top:518px;width:17px;height:196px;background:repeating-conic-gradient(#e9e9e9 0 25%,#fdfdfd 0 50%) 0 0/2px 2px"></div>
<div class="r" style="left:1262px;top:153px;width:17px;height:366px;background:#f0f0f0;border:1px solid #a0a0a0"></div>
<svg style="left:1262px;top:136px" width="17" height="594"><path d="M5.2 11.3 L8.6 7.5 L12 11.3" fill="none" stroke="#555" stroke-width="2"/><path d="M5.2 584.5 L8.6 588.3 L12 584.5" fill="none" stroke="#555" stroke-width="2"/></svg>
<div class="r" style="left:364px;top:731px;width:915px;height:19px;background:#f0f0f0;border-top:1px solid #a0a0a0;border-bottom:1px solid #808080"></div>
<div class="r" style="left:365px;top:732px;width:18px;height:17px;background:#ececec;border:1px solid #fff;border-right-color:#a0a0a0;border-bottom-color:#a0a0a0"></div>
<div class="r" style="left:384px;top:732px;width:18px;height:17px;background:#ececec;border:1px solid #fff;border-right-color:#a0a0a0;border-bottom-color:#a0a0a0"></div>
<div class="r" style="left:1242px;top:732px;width:18px;height:17px;background:#ececec;border:1px solid #fff;border-right-color:#a0a0a0;border-bottom-color:#a0a0a0"></div>
<div class="r" style="left:1261px;top:732px;width:18px;height:17px;background:#ececec;border:1px solid #fff;border-right-color:#a0a0a0;border-bottom-color:#a0a0a0"></div>
<div class="r" style="left:403px;top:732px;width:1px;height:17px;background:#a0a0a0"></div>
<div class="r" style="left:1241px;top:732px;width:1px;height:17px;background:#a0a0a0"></div>
<svg style="left:364px;top:731px" width="915" height="19"><rect x="5" y="4" width="2" height="11" fill="#000"/><path d="M16 4 L8.5 9.5 L16 15z" fill="#000"/><path d="M35 4 L27.5 9.5 L35 15z" fill="#000"/><path d="M884 4 L890.5 9.5 L884 15z" fill="#000"/><path d="M902 4 L909.5 9.5 L902 15z" fill="#000"/><rect x="909" y="4" width="2" height="11" fill="#000"/></svg>
<div class="t" style="left:407.5px;top:734.19px;font-size:11px;line-height:14px;letter-spacing:-0.14px">SQL TOP 1000 Datensatz 1 von 49 gelesenen</div>
<div class="r" style="left:0px;top:752px;width:1280px;height:18px;background:#f0f0f0"></div>
<div class="r" style="left:0px;top:752px;width:1047px;height:17px;border-top:1px solid #a0a0a0;border-left:1px solid #a0a0a0;border-right:1px solid #fff;border-bottom:1px solid #fff"></div>
<div class="r" style="left:1050px;top:752px;width:51px;height:17px;border-top:1px solid #a0a0a0;border-left:1px solid #a0a0a0;border-right:1px solid #fff;border-bottom:1px solid #fff"></div>
<div class="r" style="left:1103px;top:752px;width:38px;height:17px;border-top:1px solid #a0a0a0;border-left:1px solid #a0a0a0;border-right:1px solid #fff;border-bottom:1px solid #fff"></div>
<div class="r" style="left:1144px;top:752px;width:117px;height:17px;border-top:1px solid #a0a0a0;border-left:1px solid #a0a0a0;border-right:1px solid #fff;border-bottom:1px solid #fff"></div>
<div class="t" style="left:1055px;top:754.19px;font-size:11px;line-height:14px;">02/2019</div>
<div class="t" style="left:1110px;top:754.19px;font-size:11px;line-height:14px;">NUM</div>
<div class="t" style="left:1148px;top:754.19px;font-size:11px;line-height:14px;">admin - Mosaik.mdb</div></body></html>
